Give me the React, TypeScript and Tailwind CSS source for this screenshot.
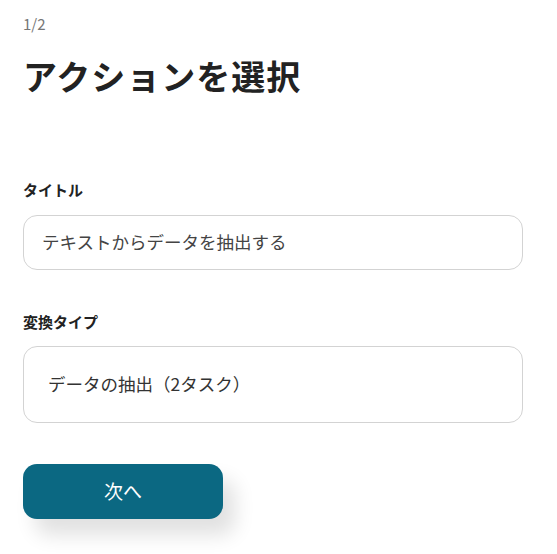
export default function App() {
  return (
    <div className="min-h-screen bg-white px-[23px] pt-[14px] font-['Noto_Sans_CJK_JP','Noto_Sans',sans-serif] text-[#222]">
      <p className="text-[15px] leading-[20px] text-[#777]">1/2</p>
      <h1 className="mt-[20px] text-[34px] font-bold leading-[44px] tracking-[1px]">アクションを選択</h1>

      <div className="mt-[81px]">
        <label className="block text-[15px] font-bold leading-[22px]">タイトル</label>
        <div className="mt-[14px] flex h-[55px] w-[500px] items-center rounded-[14px] border border-[#d3d3d3] px-[18px] text-[17.5px] text-[#444]">
          テキストからデータを抽出する
        </div>
      </div>

      <div className="mt-[41px]">
        <label className="block text-[15px] font-bold leading-[22px]">変換タイプ</label>
        <div className="mt-[13px] flex h-[77px] w-[500px] items-center rounded-[14px] border border-[#d3d3d3] px-[24px] text-[17.5px] text-[#333]">
          データの抽出（2タスク）
        </div>
      </div>

      <button className="mt-[41px] flex h-[55px] w-[200px] items-center justify-center rounded-[14px] bg-[#0b6882] text-[19px] text-white shadow-[12px_16px_20px_rgba(0,0,0,0.12)]">
        次へ
      </button>
    </div>
  )
}
